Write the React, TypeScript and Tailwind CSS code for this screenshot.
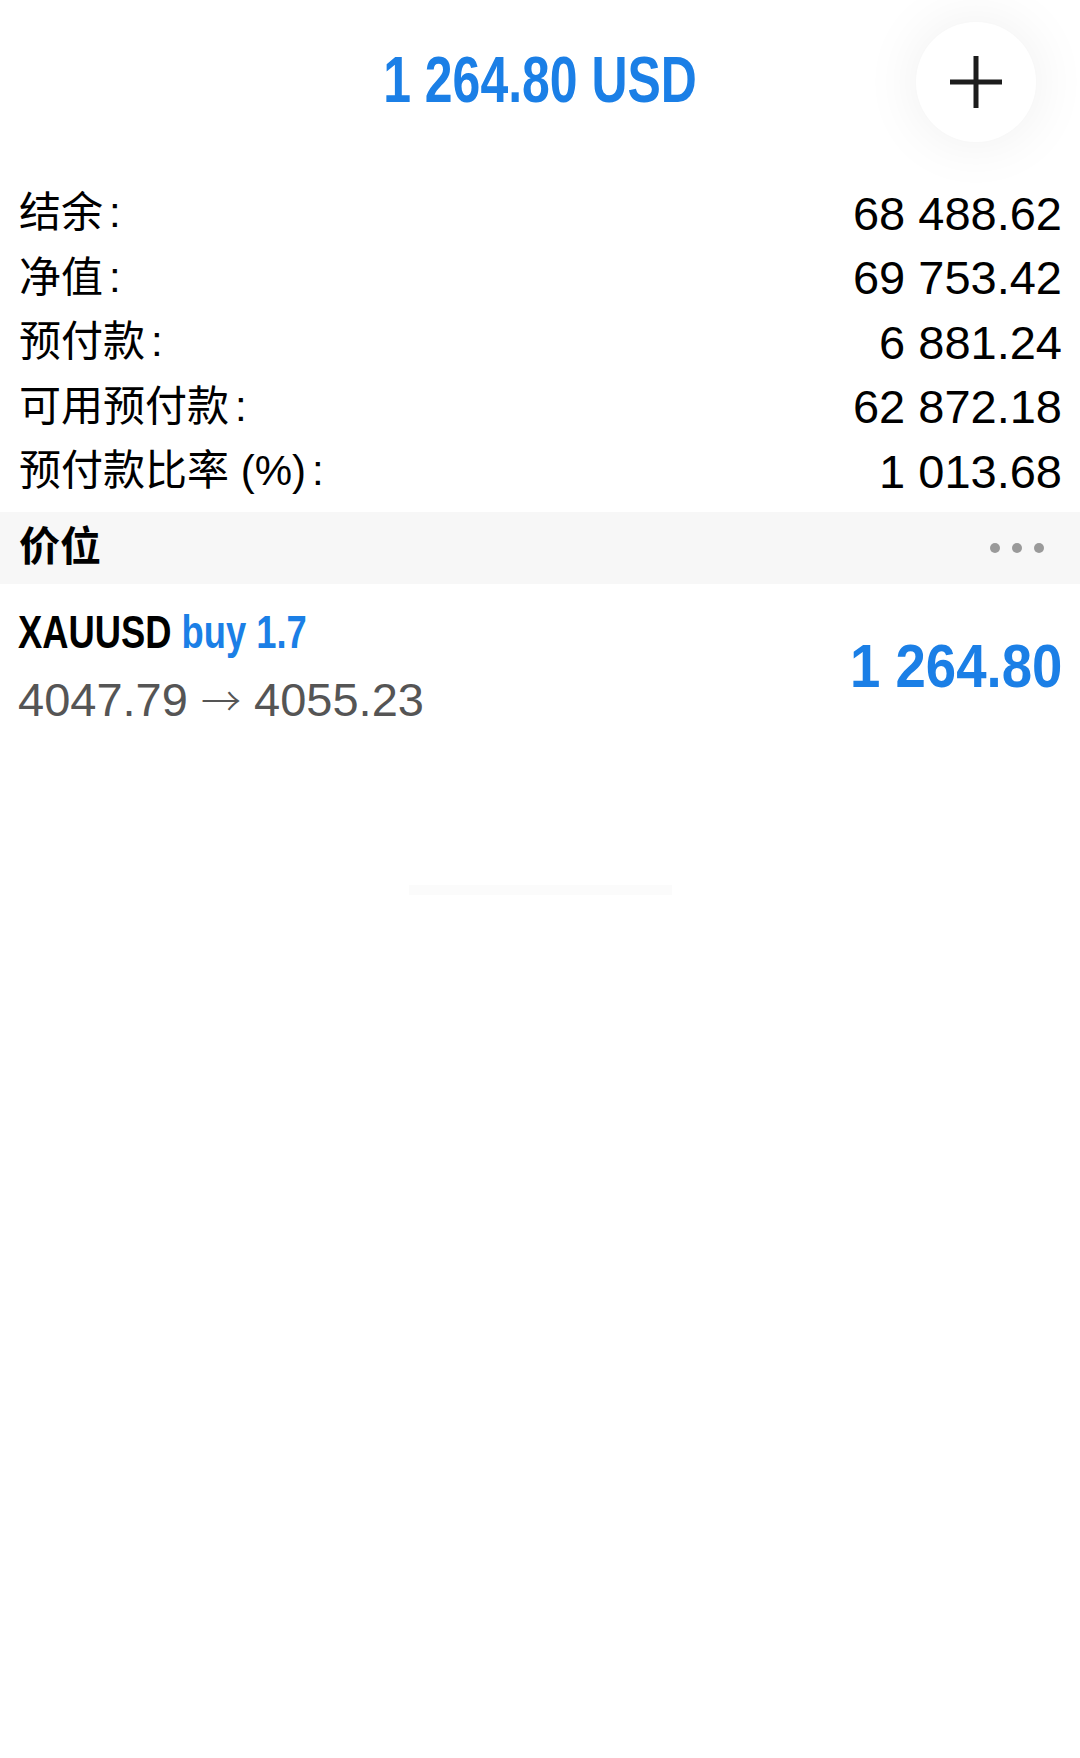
import React from 'react';

const rows = [
  { label: '结余', suffix: '', value: '68 488.62' },
  { label: '净值', suffix: '', value: '69 753.42' },
  { label: '预付款', suffix: '', value: '6 881.24' },
  { label: '可用预付款', suffix: '', value: '62 872.18' },
  { label: '预付款比率', suffix: ' (%)', value: '1 013.68' },
];

const PlusButton = () => (
  <button className="absolute left-[916px] top-[22px] w-[120px] h-[120px] rounded-full bg-white shadow-[0_0_60px_rgba(0,0,0,0.07)] flex items-center justify-center">
    <svg width="54" height="54" viewBox="0 0 54 54" fill="none">
      <path d="M27 1v52M1 27h52" stroke="#1c1c1c" strokeWidth="5" />
    </svg>
  </button>
);

export default function App() {
  return (
    <div
      className="w-[1080px] h-[1758px] bg-white text-black overflow-hidden"
      style={{ fontFamily: '"Liberation Sans", "Noto Sans CJK SC", sans-serif' }}
    >
      <header className="relative h-[181px]">
        <div className="pt-[44px] text-center">
          <span className="inline-block scale-x-[0.78] text-[64px] leading-[72px] font-bold text-[#1b7fe6]">1 264.80 USD</span>
        </div>
        <PlusButton />
      </header>

      <div className="pb-[8px]">
        {rows.map((r) => (
          <div key={r.label} className="h-[64.5px] flex items-center justify-between pl-[19px] pr-[18px]">
            <span className="text-[42px] leading-none">
              {r.label}
              {r.suffix}
              <span className="ml-[6px]">:</span>
            </span>
            <span className="text-[47px] leading-none">{r.value}</span>
          </div>
        ))}
      </div>

      <div className="h-[72px] bg-[#f7f7f7] flex items-center justify-between pl-[19px] pr-[36px]">
        <span className="text-[41px] font-bold leading-none">价位</span>
        <div className="flex gap-[12px]">
          <span className="w-[10px] h-[10px] rounded-full bg-[#9a9a9a]" />
          <span className="w-[10px] h-[10px] rounded-full bg-[#9a9a9a]" />
          <span className="w-[10px] h-[10px] rounded-full bg-[#9a9a9a]" />
        </div>
      </div>

      <div className="flex items-center justify-between pl-[18px] pr-[18px] pt-[26px] h-[160px]">
        <div className="flex flex-col gap-[16px] -mt-[22px]">
          <div className="inline-block origin-left scale-x-[0.79] text-[46px] leading-[52px] font-bold whitespace-nowrap">
            XAUUSD <span className="text-[#1b7fe6]">buy 1.7</span>
          </div>
          <div className="text-[47px] leading-[50px] text-[#555555] whitespace-nowrap">
            4047.79 <span style={{ fontFamily: '"Noto Sans CJK SC", sans-serif' }} className="text-[40px] font-light">→</span> 4055.23
          </div>
        </div>
        <span className="inline-block origin-right scale-x-[0.88] text-[62px] leading-none font-bold text-[#1b7fe6] -mt-[22px]">1 264.80</span>
      </div>

      <div className="mt-[141px] mx-auto w-[263px] h-[10px] bg-[#fbfbfb]" />
    </div>
  );
}
